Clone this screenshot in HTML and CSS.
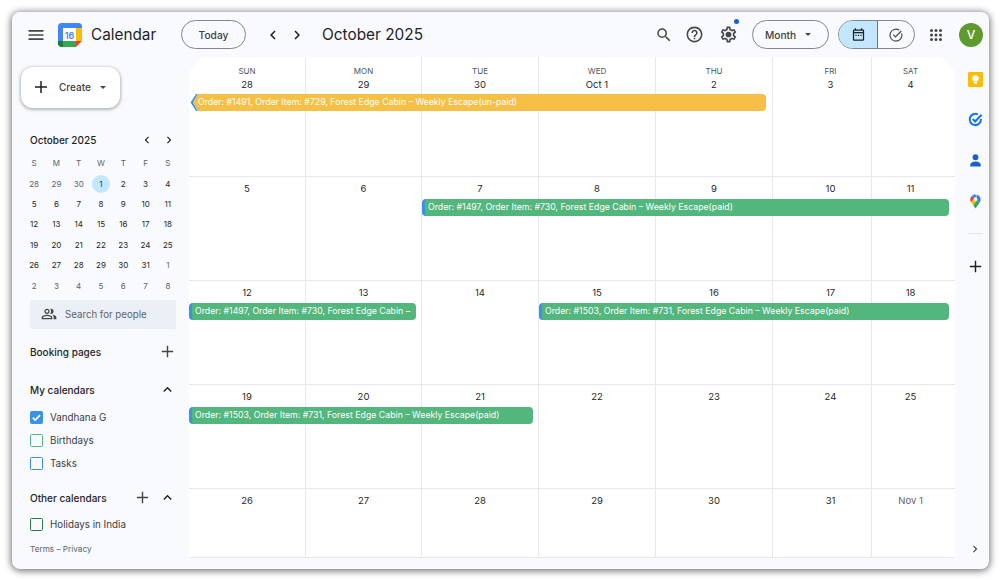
FILE: index.html
```html
<!DOCTYPE html>
<html lang="en">
<head>
<meta charset="utf-8">
<title>Calendar</title>
<link rel="stylesheet" href="styles.css">
</head>
<body>
<div class="window">
  <header class="topbar">
    <div class="brand">
      <button class="icon-btn menu"><svg viewBox="0 0 24 24" width="20" height="20"><path d="M3 18h18v-2H3v2zm0-5h18v-2H3v2zm0-7v2h18V6H3z"/></svg></button>
      <svg class="logo" viewBox="0 0 24 24" width="24" height="24">
        <path fill="#fff" d="M5 5h14v14H5z"/>
        <path fill="#4285f4" d="M5 0h16a3 3 0 0 1 3 3v2H5z"/>
        <path fill="#fbbc04" d="M18 5h6v13h-6z"/>
        <path fill="#34a853" d="M5 18h13v6H5z"/>
        <path fill="#4285f4" d="M0 3a3 3 0 0 1 3-3h2v18H0z"/>
        <path fill="#188038" d="M0 18h5v6H3a3 3 0 0 1-3-3z"/>
        <path fill="#ea4335" d="M18 18h6l-6 6z"/>
        <text x="11.5" y="15.6" text-anchor="middle" class="logo-num">16</text>
      </svg>
      <span class="brand-name">Calendar</span>
    </div>
    <button class="pill today">Today</button>
    <button class="icon-btn chev"><svg viewBox="0 0 24 24" width="18" height="18"><path d="M15.4 7.4 14 6l-6 6 6 6 1.4-1.4-4.6-4.6z"/></svg></button>
    <button class="icon-btn chev"><svg viewBox="0 0 24 24" width="18" height="18"><path d="M8.6 16.6 10 18l6-6-6-6-1.4 1.4 4.6 4.6z"/></svg></button>
    <h1 class="month-title">October 2025</h1>
    <div class="top-actions">
      <button class="icon-btn search"><svg viewBox="0 0 24 24" width="18" height="18"><path d="M15.5 14h-.79l-.28-.27A6.471 6.471 0 0 0 16 9.5 6.5 6.5 0 1 0 9.5 16c1.61 0 3.09-.59 4.23-1.57l.27.28v.79l5 4.99L20.49 19l-4.99-5zm-6 0C7.01 14 5 11.99 5 9.5S7.01 5 9.5 5 14 7.01 14 9.5 11.99 14 9.5 14z"/></svg></button>
      <button class="icon-btn"><svg viewBox="0 0 24 24" width="19" height="19"><path d="M11 18h2v-2h-2v2zm1-16C6.48 2 2 6.48 2 12s4.48 10 10 10 10-4.48 10-10S17.52 2 12 2zm0 18c-4.41 0-8-3.59-8-8s3.59-8 8-8 8 3.59 8 8-3.59 8-8 8zm0-14c-2.21 0-4 1.79-4 4h2c0-1.1.9-2 2-2s2 .9 2 2c0 2-3 1.75-3 5h2c0-2.25 3-2.5 3-5 0-2.21-1.79-4-4-4z"/></svg></button>
      <button class="icon-btn gear"><svg viewBox="0 0 24 24" width="19" height="19"><path d="M19.43 12.98c.04-.32.07-.64.07-.98 0-.34-.03-.66-.07-.98l2.11-1.65c.19-.15.24-.42.12-.64l-2-3.46c-.09-.16-.26-.25-.44-.25-.06 0-.12.01-.17.03l-2.49 1c-.52-.4-1.08-.73-1.69-.98l-.38-2.65C14.46 2.18 14.25 2 14 2h-4c-.25 0-.46.18-.49.42l-.38 2.65c-.61.25-1.17.59-1.69.98l-2.49-1c-.06-.02-.12-.03-.18-.03-.17 0-.34.09-.43.25l-2 3.46c-.13.22-.07.49.12.64l2.11 1.65c-.04.32-.07.65-.07.98 0 .33.03.66.07.98l-2.11 1.65c-.19.15-.24.42-.12.64l2 3.46c.09.16.26.25.44.25.06 0 .12-.01.17-.03l2.49-1c.52.4 1.08.73 1.69.98l.38 2.65c.03.24.24.42.49.42h4c.25 0 .46-.18.49-.42l.38-2.65c.61-.25 1.17-.59 1.69-.98l2.49 1c.06.02.12.03.18.03.17 0 .34-.09.43-.25l2-3.46c.12-.22.07-.49-.12-.64l-2.11-1.65zm-1.98-1.71c.04.31.05.52.05.73 0 .21-.02.43-.05.73l-.14 1.13.89.7 1.08.84-.7 1.21-1.27-.51-1.04-.42-.9.68c-.43.32-.84.56-1.25.73l-1.06.43-.16 1.13-.2 1.35h-1.4l-.19-1.35-.16-1.13-1.06-.43c-.43-.18-.83-.41-1.23-.71l-.91-.7-1.06.43-1.27.51-.7-1.21 1.08-.84.89-.7-.14-1.13c-.03-.31-.05-.54-.05-.74s.02-.43.05-.73l.14-1.13-.89-.7-1.08-.84.7-1.21 1.27.51 1.04.42.9-.68c.43-.32.84-.56 1.25-.73l1.06-.43.16-1.13.2-1.35h1.39l.19 1.35.16 1.13 1.06.43c.43.18.83.41 1.23.71l.91.7 1.06-.43 1.27-.51.7 1.21-1.07.85-.89.7.14 1.13z"/><circle cx="12" cy="12" r="3.6"/></svg><span class="gear-dot"></span></button>
      <button class="pill month">Month<span class="caret"></span></button>
      <div class="toggle">
        <span class="toggle-cell on"><svg viewBox="0 0 24 24" width="15" height="15"><path d="M19 4h-1V2h-2v2H8V2H6v2H5a2 2 0 0 0-2 2v14a2 2 0 0 0 2 2h14a2 2 0 0 0 2-2V6a2 2 0 0 0-2-2zm0 16H5V10h14v10zM5 8V6h14v2H5z"/><path d="M7 12.5h2v2H7zM11 12.5h2v2h-2zM15 12.5h2v2h-2z"/></svg></span>
        <span class="toggle-cell"><svg viewBox="0 0 24 24" width="16" height="16"><path fill="none" stroke="currentColor" stroke-width="1.8" d="M20.5 9.5A9 9 0 1 1 17 4.8"/><path fill="none" stroke="currentColor" stroke-width="1.8" d="M7.8 11.5l3.4 3.4L20 6"/></svg></span>
      </div>
      <button class="icon-btn apps"><svg viewBox="0 0 24 24" width="18" height="18"><path d="M6 8a2 2 0 1 0 0-4 2 2 0 0 0 0 4zm6 12a2 2 0 1 0 0-4 2 2 0 0 0 0 4zm-6 0a2 2 0 1 0 0-4 2 2 0 0 0 0 4zm0-6a2 2 0 1 0 0-4 2 2 0 0 0 0 4zm6 0a2 2 0 1 0 0-4 2 2 0 0 0 0 4zm4-8a2 2 0 1 0 4 0 2 2 0 0 0-4 0zm-4 2a2 2 0 1 0 0-4 2 2 0 0 0 0 4zm6 6a2 2 0 1 0 0-4 2 2 0 0 0 0 4zm0 6a2 2 0 1 0 0-4 2 2 0 0 0 0 4z"/></svg></button>
      <span class="avatar">V</span>
    </div>
  </header>

  <aside class="sidebar">
    <button class="create"><svg viewBox="0 0 24 24" width="18" height="18"><path d="M20 13h-7v7h-2v-7H4v-2h7V4h2v7h7z"/></svg><span>Create</span><span class="caret small"></span></button>
    <div class="mini-head">
      <span class="mini-title">October 2025</span>
      <span class="mini-nav">
        <svg viewBox="0 0 24 24" width="14" height="14"><path d="M15.4 7.4 14 6l-6 6 6 6 1.4-1.4-4.6-4.6z"/></svg>
        <svg viewBox="0 0 24 24" width="14" height="14"><path d="M8.6 16.6 10 18l6-6-6-6-1.4 1.4 4.6 4.6z"/></svg>
      </span>
    </div>
    <div class="mini-grid">
      <span class="dow">S</span><span class="dow">M</span><span class="dow">T</span><span class="dow">W</span><span class="dow">T</span><span class="dow">F</span><span class="dow">S</span>
      <span class="dim">28</span><span class="dim">29</span><span class="dim">30</span><span class="sel"><b>1</b></span><span>2</span><span>3</span><span>4</span>
      <span>5</span><span>6</span><span>7</span><span>8</span><span>9</span><span>10</span><span>11</span>
      <span>12</span><span>13</span><span>14</span><span>15</span><span>16</span><span>17</span><span>18</span>
      <span>19</span><span>20</span><span>21</span><span>22</span><span>23</span><span>24</span><span>25</span>
      <span>26</span><span>27</span><span>28</span><span>29</span><span>30</span><span>31</span><span class="dim">1</span>
      <span class="dim">2</span><span class="dim">3</span><span class="dim">4</span><span class="dim">5</span><span class="dim">6</span><span class="dim">7</span><span class="dim">8</span>
    </div>
    <div class="people"><svg viewBox="0 0 24 24" width="16" height="16"><path d="M16.67 13.13C18.04 14.06 19 15.32 19 17v3h4v-3c0-2.18-3.57-3.47-6.33-3.87zM15 12c2.21 0 4-1.79 4-4s-1.79-4-4-4c-.47 0-.91.1-1.33.24a5.98 5.98 0 0 1 0 7.52c.42.14.86.24 1.33.24zM9 12c2.21 0 4-1.79 4-4s-1.79-4-4-4-4 1.79-4 4 1.79 4 4 4zm0-6c1.1 0 2 .9 2 2s-.9 2-2 2-2-.9-2-2 .9-2 2-2zm0 7c-2.67 0-8 1.34-8 4v3h16v-3c0-2.66-5.33-4-8-4zm6 5H3v-.99C3.2 16.29 6.3 15 9 15s5.8 1.29 6 2v1z"/></svg><span>Search for people</span></div>
    <div class="section booking"><span>Booking pages</span><svg class="plus" viewBox="0 0 24 24" width="17" height="17"><path d="M20 13h-7v7h-2v-7H4v-2h7V4h2v7h7z"/></svg></div>
    <div class="section mine"><span>My calendars</span><svg class="up" viewBox="0 0 24 24" width="17" height="17"><path d="M12 8l-6 6 1.4 1.4 4.6-4.6 4.6 4.6L18 14z"/></svg></div>
    <ul class="cal-list">
      <li><span class="check check-on"><svg viewBox="0 0 14 14" width="13" height="13"><path fill="none" stroke="#fff" stroke-width="1.8" d="M3 7.2l2.6 2.6L10.8 4.4"/></svg></span>Vandhana G</li>
      <li><span class="check check-green"></span>Birthdays</li>
      <li><span class="check check-blue"></span>Tasks</li>
    </ul>
    <div class="section others"><span>Other calendars</span><span class="section-icons"><svg viewBox="0 0 24 24" width="17" height="17"><path d="M20 13h-7v7h-2v-7H4v-2h7V4h2v7h7z"/></svg><svg class="up" viewBox="0 0 24 24" width="17" height="17"><path d="M12 8l-6 6 1.4 1.4 4.6-4.6 4.6 4.6L18 14z"/></svg></span></div>
    <ul class="cal-list tight">
      <li><span class="check check-dark"></span>Holidays in India</li>
    </ul>
    <div class="legal">Terms – Privacy</div>
  </aside>

  <main class="calendar">
    <section class="week first">
      <div class="day"><span class="dow-label">SUN</span><span class="num">28</span></div>
      <div class="day"><span class="dow-label">MON</span><span class="num">29</span></div>
      <div class="day"><span class="dow-label">TUE</span><span class="num">30</span></div>
      <div class="day"><span class="dow-label">WED</span><span class="num">Oct 1</span></div>
      <div class="day"><span class="dow-label">THU</span><span class="num">2</span></div>
      <div class="day"><span class="dow-label">FRI</span><span class="num">3</span></div>
      <div class="day"><span class="dow-label">SAT</span><span class="num">4</span></div>
      <div class="event ev-yellow span-1-6"><svg class="arrow" viewBox="0 0 9 17" width="9" height="17"><path fill="#f6bf46" d="M9 0H7.6L3 8.5 7.6 17H9z"/><path fill="#3b93e6" d="M6 0 .6 8.5 6 17h1.6L3 8.5 7.6 0z"/></svg>Order: #1491, Order Item: #729, Forest Edge Cabin – Weekly Escape(un-paid)</div>
    </section>
    <section class="week">
      <div class="day"><span class="num">5</span></div>
      <div class="day"><span class="num">6</span></div>
      <div class="day"><span class="num">7</span></div>
      <div class="day"><span class="num">8</span></div>
      <div class="day"><span class="num">9</span></div>
      <div class="day"><span class="num">10</span></div>
      <div class="day"><span class="num">11</span></div>
      <div class="event ev-green span-3-8">Order: #1497, Order Item: #730, Forest Edge Cabin – Weekly Escape(paid)</div>
    </section>
    <section class="week">
      <div class="day"><span class="num">12</span></div>
      <div class="day"><span class="num">13</span></div>
      <div class="day"><span class="num">14</span></div>
      <div class="day"><span class="num">15</span></div>
      <div class="day"><span class="num">16</span></div>
      <div class="day"><span class="num">17</span></div>
      <div class="day"><span class="num">18</span></div>
      <div class="event ev-green span-1-3">Order: #1497, Order Item: #730, Forest Edge Cabin –</div>
      <div class="event ev-green span-4-8">Order: #1503, Order Item: #731, Forest Edge Cabin – Weekly Escape(paid)</div>
    </section>
    <section class="week">
      <div class="day"><span class="num">19</span></div>
      <div class="day"><span class="num">20</span></div>
      <div class="day"><span class="num">21</span></div>
      <div class="day"><span class="num">22</span></div>
      <div class="day"><span class="num">23</span></div>
      <div class="day"><span class="num">24</span></div>
      <div class="day"><span class="num">25</span></div>
      <div class="event ev-green span-1-4">Order: #1503, Order Item: #731, Forest Edge Cabin – Weekly Escape(paid)</div>
    </section>
    <section class="week last">
      <div class="day"><span class="num">26</span></div>
      <div class="day"><span class="num">27</span></div>
      <div class="day"><span class="num">28</span></div>
      <div class="day"><span class="num">29</span></div>
      <div class="day"><span class="num">30</span></div>
      <div class="day"><span class="num">31</span></div>
      <div class="day"><span class="num muted">Nov 1</span></div>
    </section>
  </main>

  <aside class="rail">
    <svg class="rail-keep" viewBox="0 0 16 16" width="15" height="15"><rect width="16" height="16" rx="1.5" fill="#fbbc04"/><circle cx="8" cy="6.8" r="3.4" fill="#fff"/><rect x="6.3" y="10.6" width="3.4" height="1.8" fill="#fff"/></svg>
    <svg class="rail-tasks" viewBox="0 0 16 16" width="15" height="15"><path fill="none" stroke="#1a73e8" stroke-width="2.2" d="M13.8 7.5A6 6 0 1 1 10.5 2.6"/><path fill="none" stroke="#1a73e8" stroke-width="2.2" d="M5 7.5l2.6 2.6L14.5 3"/></svg>
    <svg class="rail-contacts" viewBox="0 0 16 16" width="15" height="15"><circle cx="8" cy="4.5" r="3.1" fill="#1a5fc8"/><path fill="#1a5fc8" d="M2.4 14.5v-2c0-2 2.5-3.4 5.6-3.4s5.6 1.4 5.6 3.4v2z"/></svg>
    <svg class="rail-maps" viewBox="0 0 16 16" width="15" height="15"><path fill="#34a853" d="M12.4 9 8 15.5 5.4 11.6 9.5 7z"/><path fill="#fbbc04" d="M3.4 8.8 5.5 11.7 9.6 7 6.7 4.6z"/><path fill="#ea4335" d="M3.9 2.2A5.4 5.4 0 0 0 3.4 8.8L7 4.3z"/><path fill="#4285f4" d="M8 .4a5.4 5.4 0 0 0-4.1 1.8L7 4.3 9.2 3z"/><path fill="#3a7ff0" d="M9.4.6a5.4 5.4 0 0 1 3 8.4L9.6 7 9 3z"/><circle cx="8" cy="5.6" r="1.8" fill="#fff"/></svg>
    <span class="rail-divider"></span>
    <svg class="rail-plus" viewBox="0 0 24 24" width="17" height="17"><path d="M20 13h-7v7h-2v-7H4v-2h7V4h2v7h7z"/></svg>
    <svg class="rail-next" viewBox="0 0 24 24" width="14" height="14"><path d="M8.6 16.6 10 18l6-6-6-6-1.4 1.4 4.6 4.6z"/></svg>
  </aside>
</div>
</body>
</html>
```

FILE: styles.css
```css
* { box-sizing: border-box; }
html, body { margin: 0; height: 100%; background: #fff; }
body { padding: 12px 11px 11px 12px; font-family: Inter, "Liberation Sans", sans-serif; color: #1f1f1f; overflow: hidden; }
button { font: inherit; color: inherit; background: none; border: 0; padding: 0; }
ul { list-style: none; margin: 0; padding: 0; }
svg { display: block; fill: currentColor; flex: none; }

.window {
  width: 977px; height: 557px;
  display: grid;
  grid-template-columns: 177px 766px 34px;
  grid-template-rows: 45px 501px 11px;
  background: #f8fafd;
  border-radius: 8px;
  box-shadow: 0 1px 7px 1px rgba(0,0,0,.55);
  overflow: hidden;
}

/* top bar */
.topbar { grid-column: 1 / -1; display: flex; align-items: center; color: #444746; }
.icon-btn { display: flex; align-items: center; justify-content: center; }
.brand { display: flex; align-items: center; width: 169px; }
.menu { margin-left: 14px; width: 20px; }
.logo { margin-left: 12px; width: 24px; height: 24px; border-radius: 3px; }
.logo-num { font: 600 9px Inter, sans-serif; fill: #4285f4; }
.brand-name { margin-left: 9px; font-size: 15.3px; color: #1f1f1f; }
.pill { height: 29px; border: 1px solid #80868b; border-radius: 15px; font-size: 10.2px; font-weight: 500; color: #3c4043; }
.today { width: 65px; margin-right: 15px; }
.chev { width: 24px; color: #1f1f1f; }
.month-title { margin: 0 0 0 13px; font-size: 15.4px; font-weight: 400; color: #1f1f1f; }
.top-actions { margin-left: auto; display: flex; align-items: center; }
.top-actions > .icon-btn { width: 20px; margin-right: 11px; }
.top-actions > .search { margin-right: 10px; }
.top-actions > .gear { margin-left: 3px; margin-right: 14px; position: relative; }
.gear-dot { position: absolute; top: -6px; right: -1px; width: 5px; height: 5px; border-radius: 50%; background: #1a5fd8; }
.month { width: 77px; margin-right: 9px; display: flex; align-items: center; gap: 9px; padding-left: 12px; }
.caret { width: 0; height: 0; border: 3.5px solid transparent; border-top: 3.5px solid #444746; border-bottom: 0; }
.toggle { display: flex; width: 77px; height: 29px; border: 1px solid #80868b; border-radius: 15px; overflow: hidden; margin-right: 11px; }
.toggle-cell { flex: 1; display: flex; align-items: center; justify-content: center; }
.toggle-cell.on { flex: 0 0 39px; background: #c2e7ff; border-right: 1px solid #6f7478; color: #1f1f1f; }
.top-actions > .apps { margin-right: 13px; }
.avatar { width: 24px; height: 24px; margin-right: 6px; border-radius: 50%; background: #5f9a2e; color: #fff; font-size: 12px; font-weight: 500; display: flex; align-items: center; justify-content: center; }

/* sidebar */
.sidebar { grid-row: 2 / 4; padding: 10px 0 0 18px; display: flex; flex-direction: column; font-size: 10px; color: #3c4043; }
.create { margin-left: -9px; width: 99px; height: 41px; border-radius: 12px; background: #fff; box-shadow: 0 1px 3px 1px rgba(60,64,67,.35); display: flex; align-items: center; padding-left: 11px; padding-bottom: 1px; font-size: 10px; font-weight: 500; color: #3c4043; }
.create svg { color: #1f1f1f; margin-right: 9px; }
.caret.small { margin-left: 9px; }
.mini-head { margin-top: 22px; height: 20px; width: 146px; display: flex; align-items: center; justify-content: space-between; }
.mini-title { font-size: 10px; font-weight: 500; color: #1f1f1f; }
.mini-nav { display: flex; gap: 8px; color: #1f1f1f; }
.mini-grid { margin: 3px 0 0 -7px; width: 156px; display: grid; grid-template-columns: repeat(7, 1fr); grid-auto-rows: 20.4px; font-size: 8px; color: #1f1f1f; }
.mini-grid > span { display: flex; align-items: center; justify-content: center; }
.mini-grid .dow, .mini-grid .dim { color: #5f6368; }
.sel b { width: 18px; height: 18px; border-radius: 50%; background: #c2e7ff; font-weight: 400; display: flex; align-items: center; justify-content: center; color: #0b3d66; }
.people { margin-top: 4px; width: 146px; height: 29px; border-radius: 3px; background: #ebeff6; display: flex; align-items: center; gap: 8px; padding-left: 11px; font-size: 9.7px; color: #5f6368; }
.people svg { color: #444746; }
.section { width: 146px; height: 20px; display: flex; align-items: center; justify-content: space-between; font-size: 10px; font-weight: 500; color: #1f1f1f; }
.section svg { color: #444746; }
.section .up { color: #1f1f1f; }
.booking { margin-top: 13px; }
.mine { margin-top: 18px; }
.others { margin-top: 12.5px; }
.section-icons { display: flex; gap: 8px; }
.cal-list { margin-top: 6.5px; font-size: 9.8px; color: #3c4043; }
.cal-list.tight { margin-top: 5.5px; }
.cal-list li { height: 23px; display: flex; align-items: center; gap: 7px; }
.check { width: 13px; height: 13px; border: 1.7px solid; border-radius: 1.5px; display: flex; align-items: center; justify-content: center; }
.check-on { background: #3b93e6; border-color: #3b93e6; }
.check-on svg { margin: -1.7px; }
.check-green { border-color: #54b87f; }
.check-blue { border-color: #4285f4; }
.check-dark { border-color: #2d7d46; }
.legal { margin-top: 8px; font-size: 8.2px; color: #5f6368; }

/* month grid */
.calendar { background: #fff; border-radius: 22px 22px 0 0; display: grid; grid-template-rows: 120px 104px 104px 104px 69px; overflow: hidden; border-bottom: 1px solid #e6e9ef; }
.week { display: grid; grid-template-columns: 116px 116px 117px 117px 117px 99px 84px; grid-template-rows: 22px 1fr; border-bottom: 1px solid #e6e9ef; }
.week.first { grid-template-rows: 37px 1fr; }
.week.last { border-bottom: 0; }
.day { grid-row: 1 / -1; border-left: 1px solid #e6e9ef; display: flex; flex-direction: column; align-items: center; padding-top: 5px; }
.week > .day:nth-child(1) { grid-column: 1; border-left: 0; }
.week > .day:nth-child(2) { grid-column: 2; }
.week > .day:nth-child(3) { grid-column: 3; }
.week > .day:nth-child(4) { grid-column: 4; }
.week > .day:nth-child(5) { grid-column: 5; }
.week > .day:nth-child(6) { grid-column: 6; padding-left: 17px; }
.week > .day:nth-child(7) { grid-column: 7; padding-right: 6px; }
.week.first .day { padding-top: 8px; }
.dow-label { font-size: 8px; line-height: 12px; color: #50555a; }
.num { font-size: 9.5px; line-height: 14px; color: #1f1f1f; margin-top: 0; }
.week.first .num { margin-top: 1px; }
.num.muted { color: #5f6368; }

.event { grid-row: 2; z-index: 1; height: 17px; border-radius: 4px; font-size: 8.75px; line-height: 16px; color: #fff; white-space: nowrap; overflow: hidden; }
.ev-green { background: #53b67c; border-left: 3px solid #3b93e6; padding-left: 3px; }
.ev-yellow { background: #f6bf46; margin-left: 1px; padding-left: 8px; border-radius: 0 4px 4px 0; overflow: visible; display: flex; background-clip: content-box; }
.arrow { margin-left: -8px; margin-right: -1px; }
.span-1-6 { grid-column: 1 / 6; margin-right: 6px; }
.span-3-8 { grid-column: 3 / 8; margin-left: 1px; margin-right: 6px; }
.span-1-3 { grid-column: 1 / 3; margin-right: 5px; }
.span-4-8 { grid-column: 4 / 8; margin-left: 1px; margin-right: 6px; }
.span-1-4 { grid-column: 1 / 4; margin-right: 5px; }

/* right rail */
.rail { grid-column: 3; grid-row: 2 / 4; display: flex; flex-direction: column; align-items: center; padding: 14.5px 0 0 6px; color: #1f1f1f; }
.rail-tasks { margin-top: 25px; }
.rail-contacts { margin-top: 26px; }
.rail-maps { margin-top: 26px; }
.rail-divider { margin-top: 24px; width: 15px; height: 1px; background: #e3e6ea; }
.rail-plus { margin-top: 24px; }
.rail-next { margin-top: 267px; color: #444746; }
```
